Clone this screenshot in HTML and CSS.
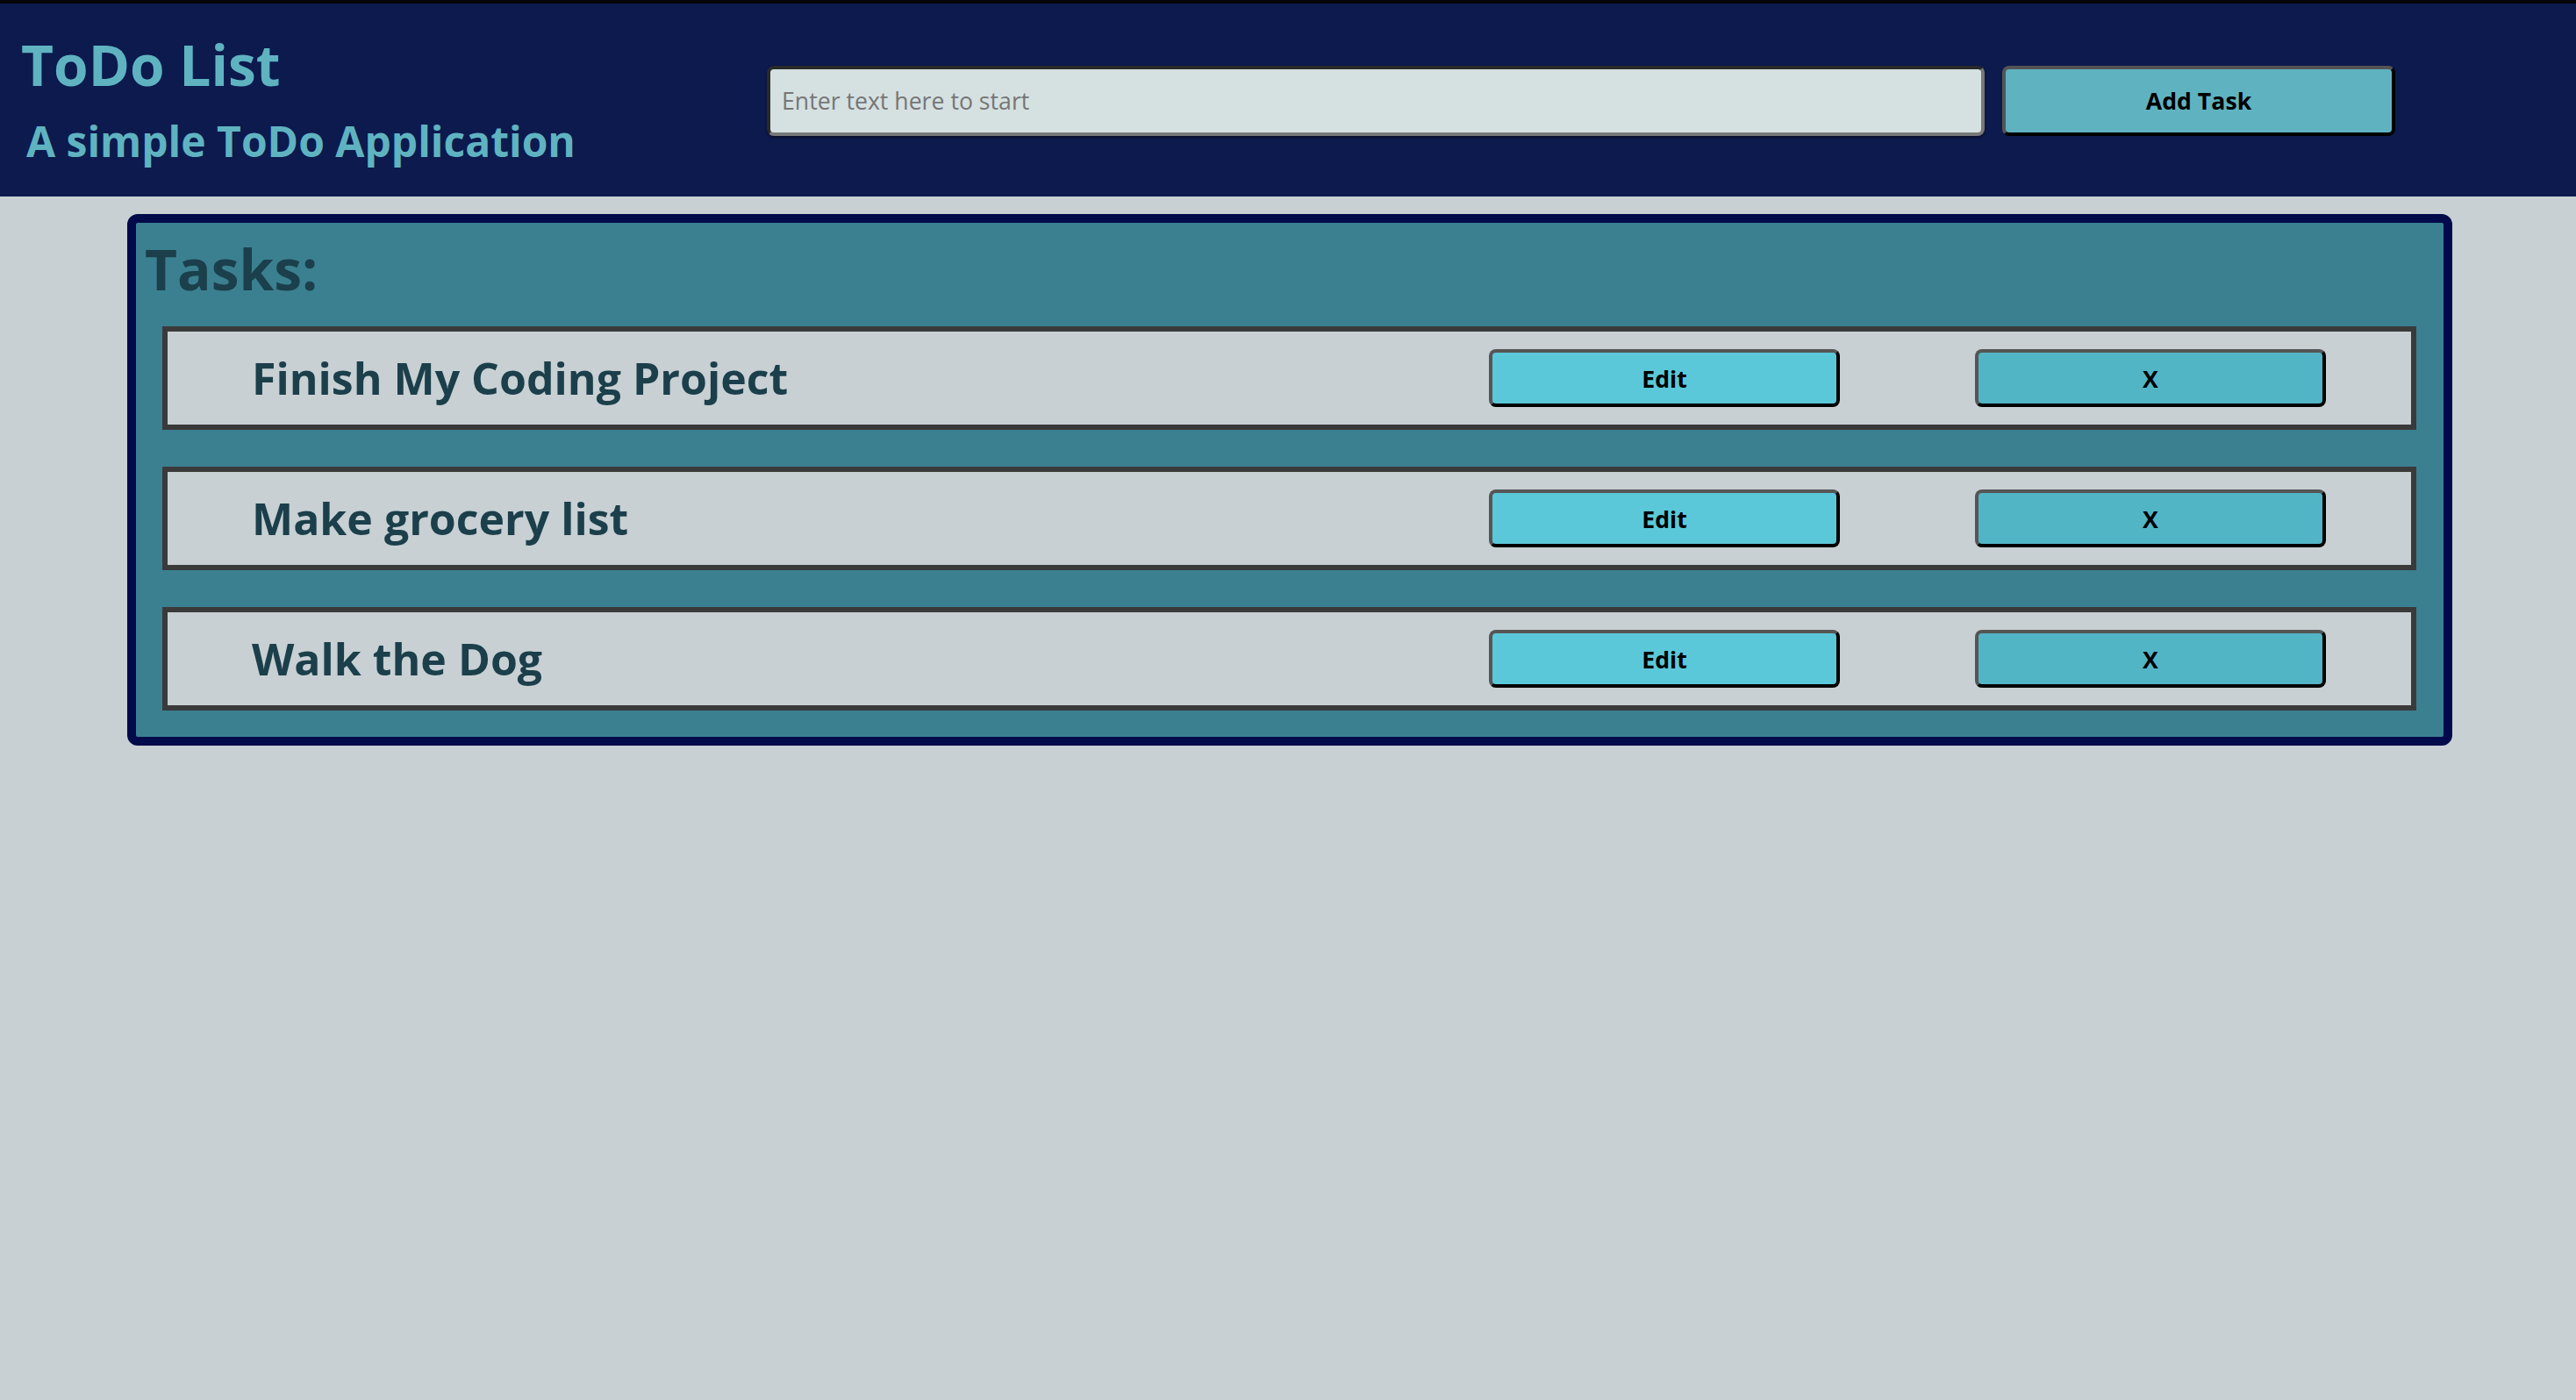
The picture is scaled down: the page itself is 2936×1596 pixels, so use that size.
FILE: index.html
```html
<!DOCTYPE html>
<html lang="en">
<head>
<meta charset="utf-8">
<title>ToDo List</title>
<link rel="stylesheet" href="styles.css">
</head>
<body>
<header class="top">
  <div class="brand">
    <h1 class="brand-title">ToDo List</h1>
    <h2 class="brand-sub">A simple ToDo Application</h2>
  </div>
  <form class="add-form">
    <input class="add-input" type="text" placeholder="Enter text here to start">
    <button class="add-btn" type="button">Add Task</button>
  </form>
</header>
<main class="panel">
  <h2 class="panel-title">Tasks:</h2>
  <div class="task-list">
    <div class="task">
      <span class="task-text">Finish My Coding Project</span>
      <button class="btn-edit" type="button">Edit</button>
      <button class="btn-del" type="button">X</button>
    </div>
    <div class="task">
      <span class="task-text">Make grocery list</span>
      <button class="btn-edit" type="button">Edit</button>
      <button class="btn-del" type="button">X</button>
    </div>
    <div class="task">
      <span class="task-text">Walk the Dog</span>
      <button class="btn-edit" type="button">Edit</button>
      <button class="btn-del" type="button">X</button>
    </div>
  </div>
</main>
</body>
</html>
```
FILE: styles.css
```css
* { box-sizing: border-box; }
html {
  background: #c8d0d3;
}
html, body { margin: 0; padding: 0; }
body {
  font-family: "Open Sans", "Noto Sans", sans-serif;
}
.top {
  display: flex;
  align-items: flex-start;
  height: 224px;
  background: #0c1a4e;
  border-top: 4px solid #050505;
}
.brand {
  flex: 0 0 874px;
  padding: 30px 0 0 24px;
}
.brand-title {
  margin: 0;
  font-size: 64px;
  line-height: 80px;
  font-weight: 700;
  color: #5fb3c1;
}
.brand-sub {
  margin: 17px 0 0 6px;
  font-size: 48px;
  line-height: 60px;
  font-weight: 700;
  color: #5fb3c1;
}
.add-form {
  display: flex;
  gap: 20px;
  margin: 71px 0 0 0;
}
.add-input {
  width: 1388px;
  height: 80px;
  padding: 0 13px;
  background: #d5e0e1;
  border: 4px solid;
  border-color: #2a2a2a #787878 #787878 #2a2a2a;
  border-radius: 8px;
  box-shadow: 0 2px 3px rgba(0, 0, 0, 0.45);
  font-family: "Open Sans", sans-serif;
  font-size: 26.67px;
  line-height: 36px;
  padding-bottom: 2px;
  color: #333;
}
.add-input::placeholder { color: #767676; }
.add-btn {
  width: 448px;
  height: 80px;
  padding-bottom: 2px;
  background: #5fb3c1;
  border: 4px solid;
  border-color: #555 #000 #000 #555;
  border-radius: 8px;
  font-family: "Open Sans", sans-serif;
  font-size: 26.67px;
  font-weight: 700;
  color: #000;
}
.panel {
  display: block;
  width: 2650px;
  margin: 20px 0 0 145px;
  padding: 0 31px 30px 30px;
  background: #3b8091;
  border: 10px solid #010a4b;
  border-radius: 12px;
}
.panel-title {
  margin: 0 0 25px -20px;
  padding-top: 13px;
  font-size: 64px;
  line-height: 80px;
  font-weight: 700;
  color: #1b3f4b;
}
.task-list {
  display: flex;
  flex-direction: column;
  gap: 42px;
}
.task {
  display: flex;
  align-items: center;
  height: 118px;
  padding: 0 97px 0 96px;
  background: #c8d0d3;
  border: 6px solid #3a3a3a;
}
.task-text {
  flex: 1;
  font-size: 50px;
  font-weight: 700;
  color: #1b3f4b;
}
.btn-edit, .btn-del {
  width: 400px;
  height: 66px;
  border: 4px solid;
  border-color: #555 #000 #000 #555;
  border-radius: 8px;
  font-family: "Open Sans", sans-serif;
  font-size: 26.67px;
  font-weight: 700;
  color: #000;
}
.btn-edit { background: #5bc8da; margin-right: 154px; }
.btn-del { background: #52b5c6; }
```
